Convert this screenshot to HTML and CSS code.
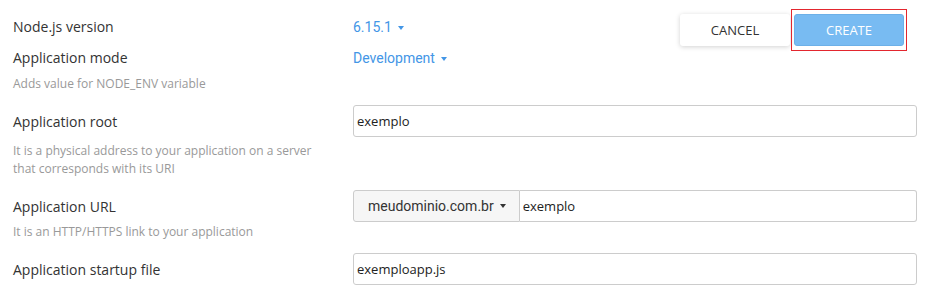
FILE: index.html
```html
<!DOCTYPE html>
<html lang="en">
<head>
<meta charset="UTF-8">
<meta name="viewport" content="width=device-width, initial-scale=1.0">
<title>Create Application</title>
<link rel="stylesheet" href="styles.css">
</head>
<body>
<div class="app-form">
    <div class="top">
        <div class="top-fields">
            <div class="row">
                <div class="field-label">Node.js version</div>
                <div><a class="dropdown" href="#">6.15.1<span class="caret"></span></a></div>
            </div>
            <div class="row row-mode">
                <div>
                    <div class="field-label">Application mode</div>
                    <div class="help">Adds value for NODE_ENV variable</div>
                </div>
                <div><a class="dropdown" href="#">Development<span class="caret"></span></a></div>
            </div>
        </div>
        <div class="actions">
            <button type="button" class="btn btn-cancel">CANCEL</button>
            <span class="highlight"><button type="button" class="btn btn-create">CREATE</button></span>
        </div>
    </div>

    <div class="field field-root">
        <div class="field-info">
            <label for="approot">Application root</label>
            <div class="help">It is a physical address to your application on a server<br>that corresponds with its URI</div>
        </div>
        <input type="text" id="approot" value="exemplo">
    </div>

    <div class="field">
        <div class="field-info">
            <label for="appurl">Application URL</label>
            <div class="help">It is an HTTP/HTTPS link to your application</div>
        </div>
        <div class="input-group">
            <span class="addon">meudominio.com.br<span class="caret"></span></span>
            <input type="text" id="appurl" value="exemplo">
        </div>
    </div>

    <div class="field">
        <div class="field-info">
            <label for="startup">Application startup file</label>
        </div>
        <input type="text" id="startup" value="exemploapp.js">
    </div>
</div>
</body>
</html>
```

FILE: styles.css
```css
body {
    margin: 0;
    font-family: 'Open Sans', sans-serif;
    background: #fff;
    color: #333;
}

.app-form {
    padding: 0 16px 0 13px;
}

.top {
    display: flex;
    justify-content: space-between;
    align-items: flex-start;
    padding-top: 9px;
}

.top-fields {
    flex: 1;
    padding-top: 8px;
}

.row {
    display: grid;
    grid-template-columns: 340px 1fr;
    font-size: 14px;
    line-height: 20px;
}

.row-mode {
    margin-top: 11px;
}

.row-mode .help {
    margin-top: 7px;
}

.field-label,
label {
    display: block;
    font-size: 14px;
    line-height: 20px;
    color: #333;
}

.help {
    font-size: 12px;
    line-height: 18px;
    color: #999;
    margin-top: 6px;
}

.dropdown {
    font-family: Roboto, sans-serif;
    font-size: 14px;
    line-height: 20px;
    color: #4396e6;
    text-decoration: none;
}

.caret {
    display: inline-block;
    width: 0;
    height: 0;
    margin-left: 6px;
    vertical-align: middle;
    border-left: 3.5px solid transparent;
    border-right: 3.5px solid transparent;
    border-top: 4px solid currentColor;
}

.actions {
    display: flex;
    align-items: center;
    margin-right: 10px;
}

.btn {
    width: 110px;
    height: 32px;
    font-family: 'Open Sans', sans-serif;
    font-size: 13px;
    border-radius: 3px;
    cursor: pointer;
}

.btn-cancel {
    background: #fff;
    color: #333;
    border: none;
    box-shadow: 0 1px 5px rgba(0,0,0,0.18);
    margin-right: 1px;
}

.btn-create {
    display: block;
    background: #78bbf2;
    color: #fff;
    border: 1px solid #6cb0e8;
}

.highlight {
    display: block;
    border: 1px solid #e3262e;
    padding: 4px 2px;
}

.field {
    display: grid;
    grid-template-columns: 340px 1fr;
    align-items: start;
    margin-top: 12px;
}

.field-info {
    padding-top: 7px;
}

.field .help {
    margin-top: 6px;
}

.field-root .help {
    margin-top: 10px;
}

input {
    width: 100%;
    height: 32px;
    box-sizing: border-box;
    padding: 0 3px;
    border: 1px solid #ccc;
    border-radius: 3px;
    font-family: 'Open Sans', sans-serif;
    font-size: 13px;
    color: #222;
    background: #fff;
}

.input-group {
    display: flex;
}

.addon {
    display: flex;
    align-items: center;
    height: 32px;
    box-sizing: border-box;
    padding: 0 13px 0 14px;
    background: #f6f6f6;
    border: 1px solid #ccc;
    border-radius: 3px 0 0 3px;
    font-family: Roboto, sans-serif;
    font-size: 14px;
    color: #333;
}

.input-group input {
    flex: 1;
    border-left: none;
    border-radius: 0 3px 3px 0;
}
```
